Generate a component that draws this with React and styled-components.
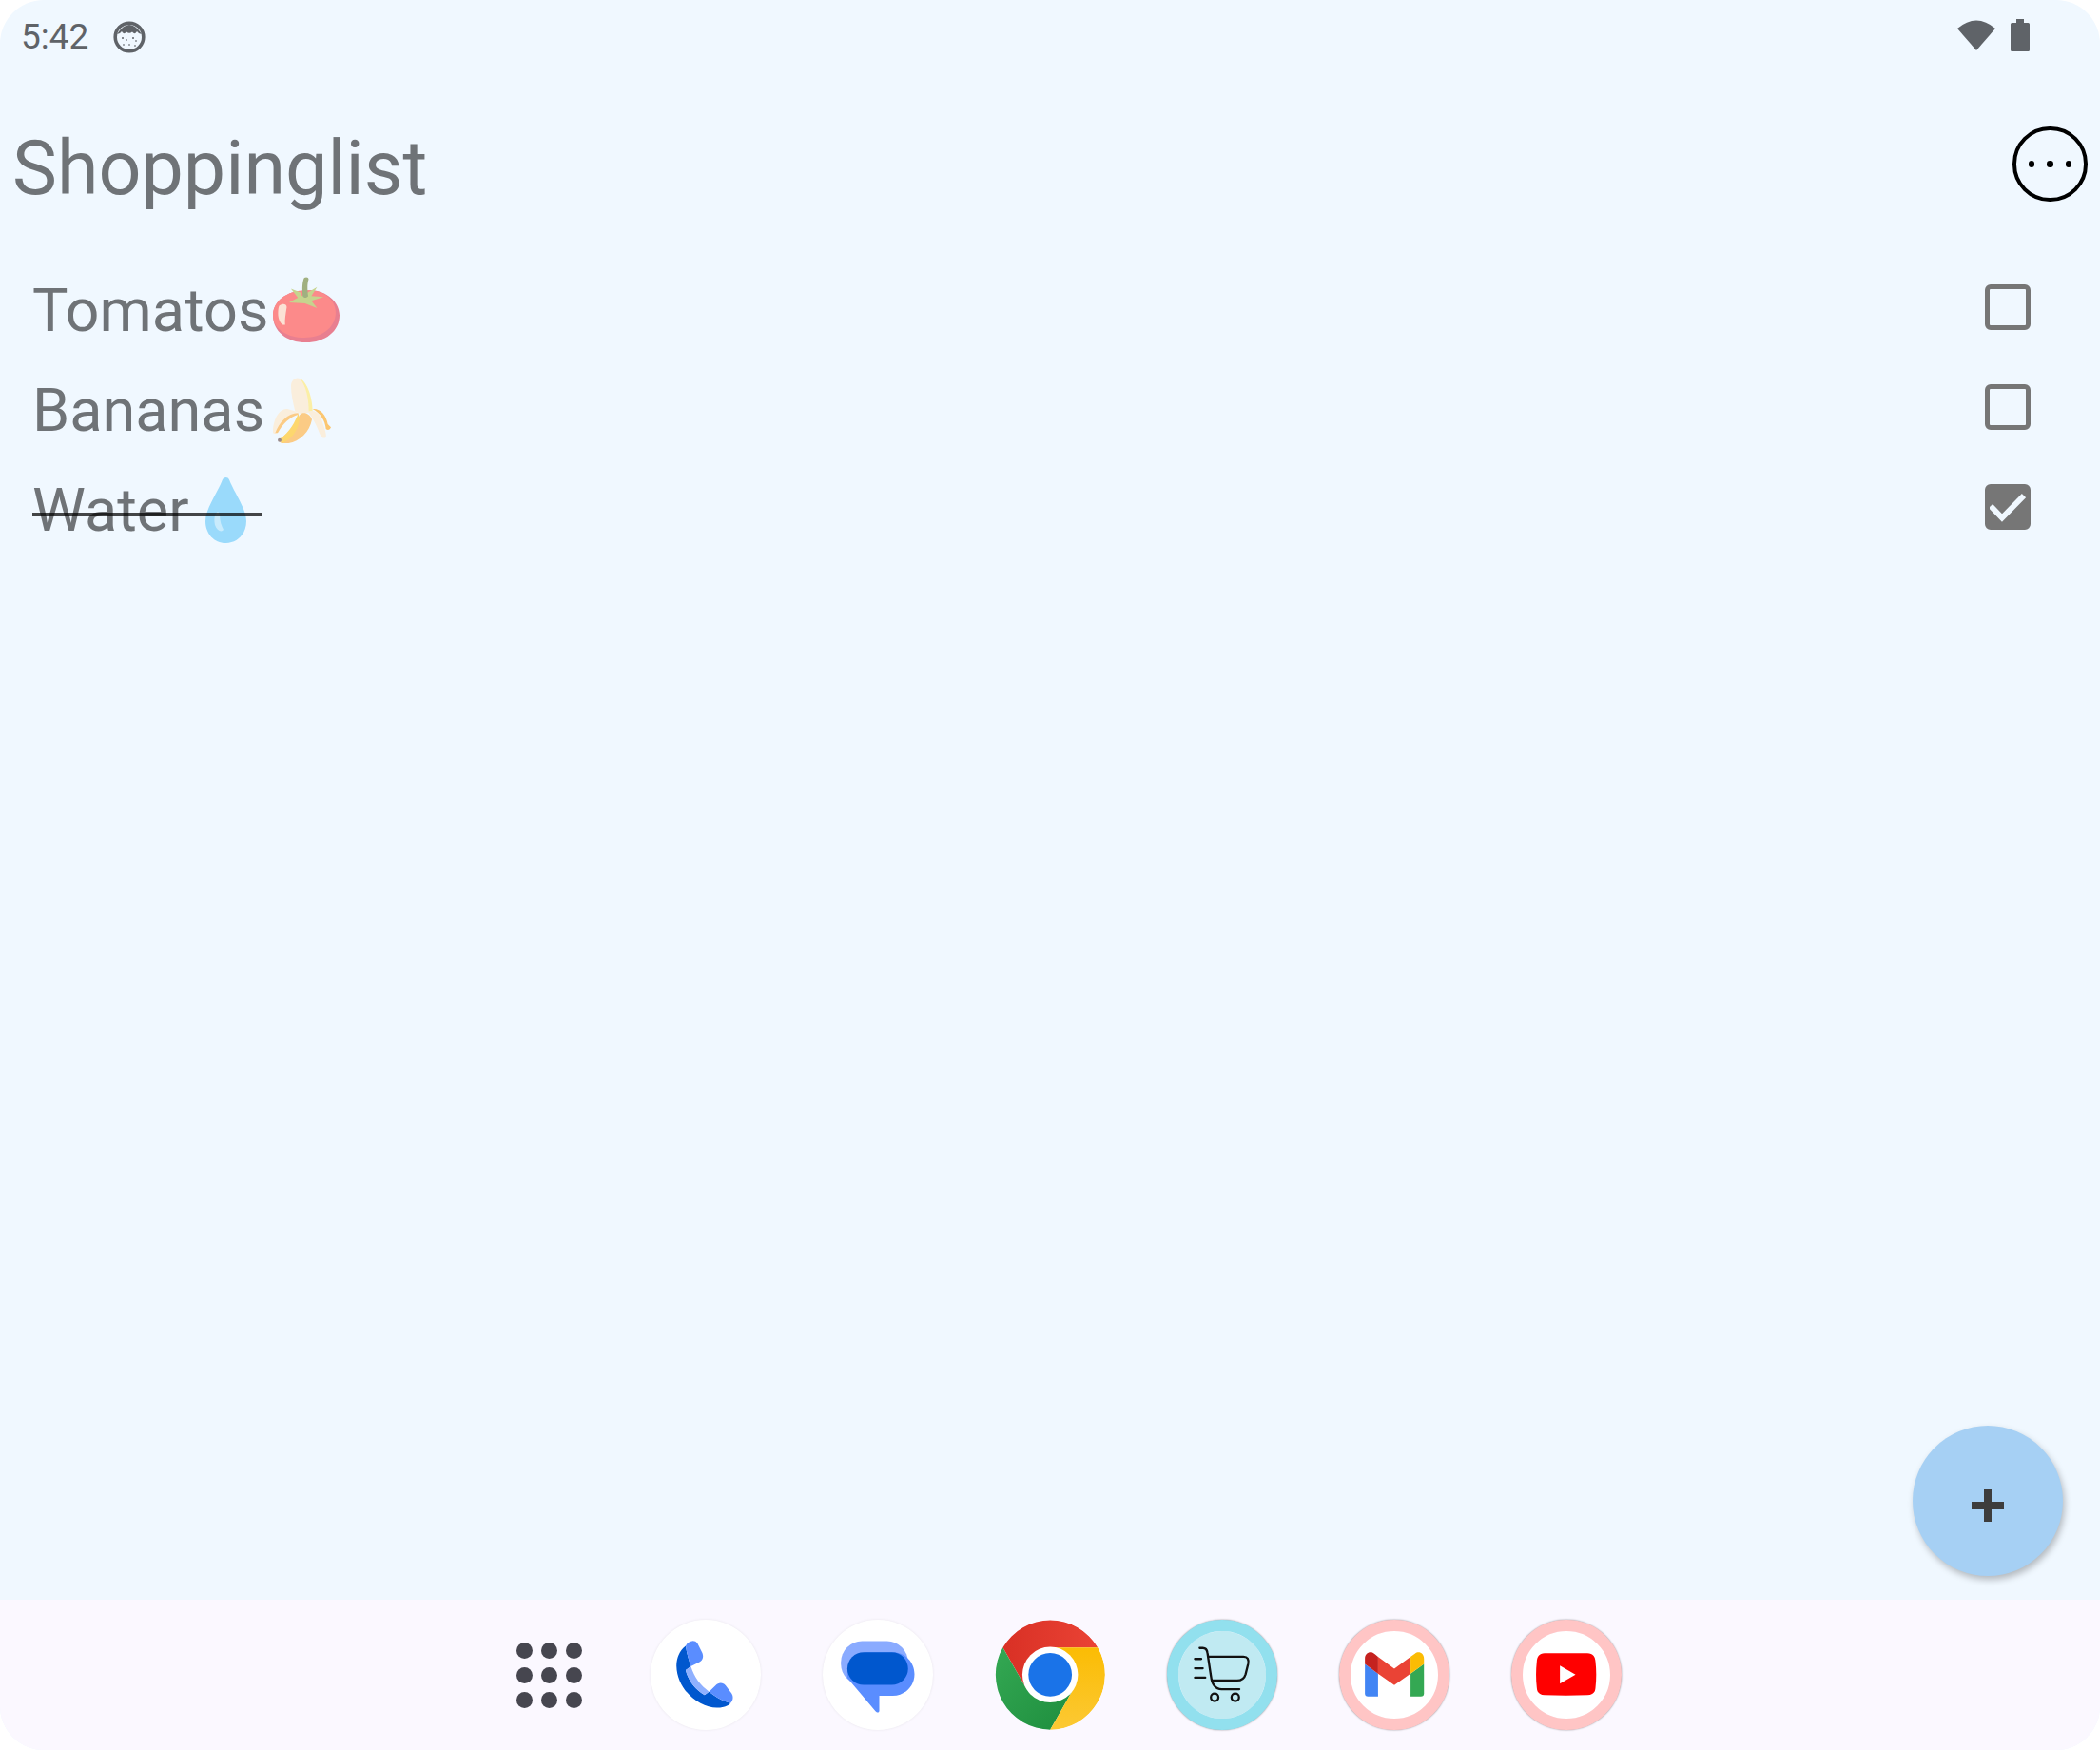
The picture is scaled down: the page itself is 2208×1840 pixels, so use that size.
import React from "react";
import styled, { createGlobalStyle } from "styled-components";

const GlobalStyle = createGlobalStyle`
  html, body {
    margin: 0;
    padding: 0;
    background: #ffffff;
  }
  * {
    box-sizing: border-box;
  }
`;

const Screen = styled.div`
  width: 2208px;
  height: 1840px;
  display: flex;
  flex-direction: column;
  background: #f0f8ff;
  border-radius: 46px;
  overflow: hidden;
  font-family: Roboto, "Liberation Sans", sans-serif;
`;

const StatusBar = styled.div`
  height: 78px;
  display: flex;
  align-items: center;
  padding: 0 74px 0 22px;
  color: #5f6368;
`;

const Time = styled.span`
  font-size: 37px;
  line-height: 78px;
  margin-right: 26px;
`;

const StatusRight = styled.div`
  margin-left: auto;
  margin-bottom: 4px;
  display: flex;
  align-items: center;
  gap: 16px;
`;

const Header = styled.div`
  height: 192px;
  display: flex;
  align-items: flex-start;
  justify-content: space-between;
  padding: 52px 13.5px 0 13px;
`;

const Title = styled.h1`
  margin: 0;
  font-size: 79px;
  line-height: 94px;
  font-weight: 400;
  color: #6f7377;
`;

const MoreButton = styled.div`
  width: 78.5px;
  height: 78.5px;
  margin-top: 3px;
  border: 4px solid #000000;
  border-radius: 50%;
  display: flex;
  align-items: center;
  justify-content: center;
  gap: 13px;
`;

const MoreDot = styled.span`
  width: 6.5px;
  height: 6.5px;
  border-radius: 50%;
  background: #000000;
`;

const List = styled.div`
  display: flex;
  flex-direction: column;
  padding: 0 73px 0 34px;
`;

const Row = styled.div`
  height: 105px;
  display: flex;
  align-items: center;
  justify-content: space-between;
`;

const Label = styled.div`
  position: relative;
  margin-top: 8px;
  display: flex;
  align-items: center;
  gap: ${(p) => p.$gap}px;
  font-size: 63px;
  line-height: 74px;
  color: #6f7377;

  ${(p) =>
    p.$done &&
    `
    &::after {
      content: "";
      position: absolute;
      left: 0;
      right: -17px;
      top: 39px;
      height: 4px;
      background: rgba(0, 0, 0, 0.72);
    }
  `}
`;

const Emoji = styled.svg`
  display: block;
  flex: none;
  margin-top: ${(p) => p.$shift || 0}px;
`;

const Checkbox = styled.div`
  width: 48px;
  height: 48px;
  border: 5px solid #767676;
  border-radius: 6px;
  background: ${(p) => (p.$checked ? "#767676" : "transparent")};
  display: flex;
  align-items: center;
  justify-content: center;
`;

const Spacer = styled.div`
  flex: 1;
`;

const FabRow = styled.div`
  display: flex;
  justify-content: flex-end;
  padding: 0 39px 25px 0;
`;

const Fab = styled.div`
  width: 158px;
  height: 158px;
  border-radius: 50%;
  background: #a6d0f4;
  box-shadow: 2px 4px 7px rgba(0, 0, 0, 0.25);
  display: flex;
  align-items: center;
  justify-content: center;
`;

const Dock = styled.div`
  height: 158px;
  background: #fbf8ff;
  display: flex;
  align-items: center;
  padding-left: 543px;
`;

const AppsGrid = styled.div`
  display: grid;
  grid-template-columns: repeat(3, 17px);
  grid-auto-rows: 17px;
  gap: 9px;
  margin-right: 72px;
`;

const AppsDot = styled.span`
  border-radius: 50%;
  background: #46464f;
`;

const DockIcon = styled.div`
  width: 116px;
  height: 116px;
  margin-right: 65px;
  flex: none;
  border-radius: 50%;
  border: ${(p) => (p.$ring ? `12px solid ${p.$ring}` : "none")};
  background: ${(p) => p.$bg || "#ffffff"};
  background-clip: padding-box;
  box-shadow: ${(p) =>
    p.$ring ? "0 0 2px rgba(0, 0, 0, 0.45)" : p.$flat ? "none" : "0 0 3px rgba(0, 0, 0, 0.08)"};
  overflow: hidden;

  svg {
    display: block;
    width: 100%;
    height: 100%;
  }
`;

const Avatar = () => (
  <svg width="34" height="34" viewBox="0 0 34 34">
    <circle cx="17" cy="17" r="14.8" fill="#f0f8ff" stroke="#5f6368" strokeWidth="3.6" />
    <path d="M4 14 Q17 -6 30 14 Q27 14 25 11 Q23 15 20 11.5 Q17 14 14 11.5 Q11 15 9 11 Q7 14 4 14 Z" fill="#5f6368" />
    <circle cx="10" cy="18" r="1" fill="#5f6368" />
    <circle cx="14" cy="20" r="1" fill="#8a8f94" />
    <circle cx="21" cy="18" r="1" fill="#5f6368" />
    <circle cx="24" cy="21" r="1" fill="#8a8f94" />
    <circle cx="17" cy="25" r="1" fill="#8a8f94" />
    <circle cx="11" cy="25" r="1" fill="#8a8f94" />
    <circle cx="23" cy="26" r="1" fill="#8a8f94" />
  </svg>
);

const Wifi = () => (
  <svg width="40" height="34" viewBox="0 0 40 34">
    <path d="M0 10 Q20 -7 40 10 L20 33 Z" fill="#5f6368" />
  </svg>
);

const Battery = () => (
  <svg width="20" height="34" viewBox="0 0 20 34">
    <path d="M6 0 H14 V4 H18.5 Q20 4 20 5.5 V32.5 Q20 34 18.5 34 H1.5 Q0 34 0 32.5 V5.5 Q0 4 1.5 4 H6 Z" fill="#5f6368" />
  </svg>
);

const Tomato = () => (
  <Emoji width="70" height="69" viewBox="52 35 208 205" $shift={-2}>
    <path d="M156 78 C210 70 260 110 260 155 C260 205 215 240 155 240 C95 240 52 205 52 155 C52 110 100 75 156 78 Z" fill="#e87f90" />
    <path d="M156 78 C205 72 250 105 248 150 C245 195 205 225 150 225 C100 225 52 200 52 155 C52 110 100 75 156 78 Z" fill="#fc8a8a" />
    <path d="M72 125 C80 118 95 118 95 130 C92 150 88 170 90 185 C78 188 68 170 68 150 C68 140 69 130 72 125 Z" fill="#fbe2d5" />
    <path d="M108 72 L140 85 L142 95 L160 85 L190 67 L172 95 L210 98 L172 110 L190 133 L152 118 L102 115 L130 100 Z" fill="#c6d48e" />
    <path d="M145 95 C142 70 145 45 150 38 C158 34 165 38 163 45 C158 60 160 80 162 95 C158 102 148 102 145 95 Z" fill="#a0b080" />
  </Emoji>
);

const Banana = () => (
  <Emoji width="61" height="69" viewBox="55 33 183 207">
    <path d="M112 60 C112 42 125 30 140 36 C165 50 178 100 178 138 L150 150 L125 140 C118 110 112 85 112 60 Z" fill="#faeedc" />
    <path d="M140 36 C165 48 180 100 180 140 L168 142 C168 100 160 60 140 36 Z" fill="#fbefa6" />
    <path d="M75 228 C110 205 130 170 140 150 C150 140 170 145 178 165 C170 210 130 242 90 241 C80 241 72 235 75 228 Z" fill="#fbcb85" />
    <path d="M75 228 C110 205 125 170 135 147 C145 170 130 220 85 240 Z" fill="#fdd76e" />
    <circle cx="76" cy="230" r="6" fill="#9a8a8a" />
    <path d="M55 205 C55 165 75 130 100 132 C115 135 130 140 135 148 C115 150 85 175 70 205 C65 212 55 212 55 205 Z" fill="#faeedc" />
    <path d="M62 208 C75 175 100 145 135 145 L135 150 C110 155 85 180 70 208 Z" fill="#fbcb85" />
    <path d="M180 132 C205 130 222 150 228 180 L238 190 C235 198 228 200 222 195 C220 170 205 145 180 132 Z" fill="#fbc670" />
    <path d="M165 140 C180 135 195 140 205 155 C212 180 225 205 222 222 C215 226 208 222 205 215 C195 190 185 165 165 140 Z" fill="#faeedc" />
  </Emoji>
);

const Drop = () => (
  <Emoji width="43" height="69" viewBox="0 0 43 69">
    <path d="M21.5 0 C25 0 25 3 27 7 C32 18 43 34 43 46 C43 59 34 69 21.5 69 C9 69 0 59 0 46 C0 34 11 18 16 7 C18 3 18 0 21.5 0 Z" fill="#9adafb" />
    <path d="M11 38 C13 35 14 36 15 39 C15 46 17 51 19 55 C17 58 12 56 10 50 C9 46 9 41 11 38 Z" fill="#c9ebfc" />
  </Emoji>
);

const Check = () => (
  <svg width="38" height="38" viewBox="0 0 38 38">
    <path d="M1 18 L13 30.5 L36 7" fill="none" stroke="#f0f8ff" strokeWidth="6" />
  </svg>
);

const Plus = () => (
  <svg width="34" height="34" viewBox="0 0 34 34" style={{ marginTop: 10 }}>
    <path d="M13 0 H21 V13 H34 V21 H21 V34 H13 V21 H0 V13 H13 Z" fill="#3d3d3d" />
  </svg>
);

const PhoneIcon = () => (
  <svg viewBox="495 68 345 345">
    <path d="M605 150 C585 165 576 190 576 212 C578 290 650 345 705 343 C722 343 738 338 745 329 C720 322 698 310 678 293 L664 304 C634 286 612 258 605 226 L621 214 C614 192 608 172 605 150 Z" fill="#0057ce" />
    <path d="M605 150 C612 135 632 128 642 142 L657 172 C663 188 655 197 648 200 L621 214 C614 192 608 172 605 150 Z" fill="#5a8dff" />
    <path d="M678 293 L698 274 C708 263 722 264 730 274 L748 298 C756 310 752 322 745 329 C720 322 698 310 678 293 Z" fill="#5a8dff" />
    <path d="M605 226 L621 214 C632 250 652 274 678 293 L664 304 C634 286 612 258 605 226 Z" fill="#8fb0ff" />
  </svg>
);

const MessagesIcon = () => (
  <svg viewBox="78 68 345 345">
    <rect x="135" y="135" width="210" height="137" rx="66" fill="#8aabff" />
    <path d="M155 250 L243 354 C248 360 255 360 255 352 V306 H297 C335 306 365 276 365 238 C365 200 335 170 297 170 H223 C185 170 155 200 155 238 Z" fill="#5a8dff" />
    <rect x="155" y="170" width="190" height="102" rx="51" fill="#0057ce" />
  </svg>
);

const ChromeIcon = () => (
  <svg viewBox="620 68 345 345">
    <defs>
      <linearGradient id="chromeRed" x1="0" y1="0" x2="1" y2="0">
        <stop offset="0" stopColor="#d93025" />
        <stop offset="1" stopColor="#ea4335" />
      </linearGradient>
      <linearGradient id="chromeGreen" x1="0" y1="0" x2="1" y2="1">
        <stop offset="0" stopColor="#34a853" />
        <stop offset="1" stopColor="#1e8e3e" />
      </linearGradient>
      <linearGradient id="chromeYellow" x1="0" y1="0" x2="0" y2="1">
        <stop offset="0" stopColor="#fbbc04" />
        <stop offset="1" stopColor="#fcc934" />
      </linearGradient>
    </defs>
    <path d="M645 155 A172 172 0 0 1 942 155 L793 155 L793 240 L718 283 Z" fill="url(#chromeRed)" />
    <path d="M645 155 L718 283 L793 240 L860 295 L793 412 A172 172 0 0 1 645 155 Z" fill="url(#chromeGreen)" />
    <path d="M942 155 A172 172 0 0 1 793 412 L860 295 L793 240 L793 155 Z" fill="url(#chromeYellow)" />
    <circle cx="793" cy="240" r="87" fill="#ffffff" />
    <circle cx="793" cy="240" r="68" fill="#1a73e8" />
  </svg>
);

const CartIcon = () => (
  <svg viewBox="117 102 280 280">
    <g fill="none" stroke="#111111" strokeWidth="7" strokeLinecap="round">
      <path d="M185 156 H195 Q208 156 210 172 L221 245 Q226 288 255 288 H312" />
      <path d="M215 184 H325 Q345 184 340 208 L332 240 Q326 260 305 260 H225" />
      <circle cx="233" cy="314" r="12" />
      <circle cx="299" cy="314" r="12" />
      <path d="M170 191 H190 M170 221 H195 M170 251 H203" />
    </g>
  </svg>
);

const GmailIcon = () => (
  <svg viewBox="120 102 280 280">
    <path d="M166 207 L208 238 V311 H176 Q166 311 166 301 Z" fill="#4285f4" />
    <path d="M355 207 L312 238 V311 H345 Q355 311 355 301 Z" fill="#34a853" />
    <path d="M208 184 L260 222 L312 184 V238 L260 275 L208 238 Z" fill="#ea4335" />
    <path d="M166 190 C166 170 186 164 198 176 L208 184 V238 L166 207 Z" fill="#c5221f" />
    <path d="M312 184 L326 174 C338 164 355 172 355 190 V207 L312 238 Z" fill="#fbbc04" />
  </svg>
);

const YoutubeIcon = () => (
  <svg viewBox="663 102 280 280">
    <path d="M733 173 H870 C888 174 895 184 896 200 C899 228 899 254 896 282 C895 298 888 306 870 307 C825 309 778 309 733 307 C716 306 709 298 708 282 C705 254 705 228 708 200 C709 184 716 174 733 173 Z" fill="#ff0000" />
    <path d="M782 212 L832 241 L782 270 Z" fill="#ffffff" />
  </svg>
);

const items = [
  { name: "Tomatos", icon: <Tomato />, gap: 5 },
  { name: "Bananas", icon: <Banana />, gap: 9 },
  { name: "Water", icon: <Drop />, gap: 17, done: true },
];

export default function App() {
  return (
    <>
      <GlobalStyle />
      <Screen>
        <StatusBar>
          <Time>5:42</Time>
          <Avatar />
          <StatusRight>
            <Wifi />
            <Battery />
          </StatusRight>
        </StatusBar>
        <Header>
          <Title>Shoppinglist</Title>
          <MoreButton>
            <MoreDot />
            <MoreDot />
            <MoreDot />
          </MoreButton>
        </Header>
        <List>
          {items.map((item) => (
            <Row key={item.name}>
              <Label $gap={item.gap} $done={item.done}>
                {item.name}
                {item.icon}
              </Label>
              <Checkbox $checked={item.done}>{item.done && <Check />}</Checkbox>
            </Row>
          ))}
        </List>
        <Spacer />
        <FabRow>
          <Fab>
            <Plus />
          </Fab>
        </FabRow>
        <Dock>
          <AppsGrid>
            {Array.from({ length: 9 }, (_, i) => (
              <AppsDot key={i} />
            ))}
          </AppsGrid>
          <DockIcon>
            <PhoneIcon />
          </DockIcon>
          <DockIcon>
            <MessagesIcon />
          </DockIcon>
          <DockIcon $flat $bg="transparent">
            <ChromeIcon />
          </DockIcon>
          <DockIcon $ring="#92e0ee" $bg="#c0eaf2">
            <CartIcon />
          </DockIcon>
          <DockIcon $ring="#ffc5c5">
            <GmailIcon />
          </DockIcon>
          <DockIcon $ring="#ffc5c5">
            <YoutubeIcon />
          </DockIcon>
        </Dock>
      </Screen>
    </>
  );
}
